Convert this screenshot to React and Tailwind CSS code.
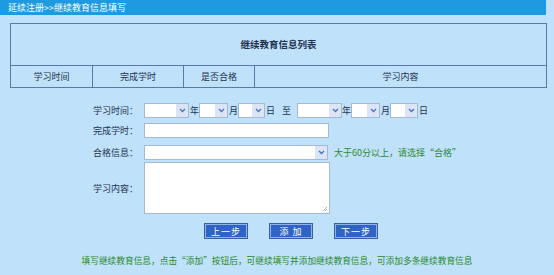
import React from 'react'

const cjk = { fontFamily: '"Noto Sans CJK SC", "Noto Sans", sans-serif' }

const Select = ({ w }) => (
  <div className={`h-[15px] ${w} bg-white border border-[#a5b8d4] flex justify-end`}>
    <div className="w-[12px] h-full bg-[#dce5f5] flex items-center justify-center">
      <svg width="7" height="5" viewBox="0 0 7 5">
        <path d="M1 1 L3.5 3.5 L6 1" fill="none" stroke="#4b6fbf" strokeWidth="1.3" />
      </svg>
    </div>
  </div>
)

const Label = ({ children }) => (
  <div className="w-[60px] text-right pr-[6px] text-[9px] leading-none text-[#22324f]">{children}</div>
)

const Btn = ({ children }) => (
  <div className="w-[42px] h-[14px] bg-[#2f63c5] border border-[#8fb2ea] outline outline-1 outline-[#3b5ea8] flex items-center justify-center text-white text-[9px] leading-none tracking-[1px]">
    {children}
  </div>
)

export default function App() {
  return (
    <div className="w-[554px] h-[275px] bg-[#bfe1fa] flex flex-col" style={cjk}>
      {/* 顶部栏 */}
      <div className="w-[546px] h-[15px] bg-[#1e9be0] flex items-center pl-[8px] text-white text-[9px] leading-none">
        延续注册&gt;&gt;继续教育信息填写
      </div>

      {/* 列表 */}
      <div className="ml-[10px] mt-[8px] w-[537px] border border-[#5a78a8] text-[#22324f]">
        <div className="h-[41px] flex items-center justify-center text-[9.5px] font-bold leading-none">
          继续教育信息列表
        </div>
        <div className="h-[22px] grid grid-cols-[82px_91px_71px_1fr] border-t border-[#5a78a8] text-[9px] leading-none">
          <div className="flex items-center justify-center border-r border-[#5a78a8]">学习时间</div>
          <div className="flex items-center justify-center border-r border-[#5a78a8]">完成学时</div>
          <div className="flex items-center justify-center border-r border-[#5a78a8]">是否合格</div>
          <div className="flex items-center justify-center">学习内容</div>
        </div>
      </div>

      {/* 表单 */}
      <div className="mt-[15px] flex flex-col pl-[84px] text-[#22324f]">
        <div className="flex items-center h-[15px]">
          <Label>学习时间：</Label>
          <Select w="w-[45px]" />
          <span className="ml-[1px] w-[9px] text-[9px] leading-none">年</span>
          <Select w="w-[29px]" />
          <span className="ml-[1px] w-[9px] text-[9px] leading-none">月</span>
          <Select w="w-[27px]" />
          <span className="ml-[1px] w-[9px] text-[9px] leading-none">日</span>
          <span className="ml-[7px] w-[9px] text-[9px] leading-none">至</span>
          <div className="ml-[6px]"><Select w="w-[45px]" /></div>
          <span className="w-[9px] text-[9px] leading-none">年</span>
          <Select w="w-[29px]" />
          <span className="ml-[1px] w-[9px] text-[9px] leading-none">月</span>
          <Select w="w-[28px]" />
          <span className="ml-[1px] w-[9px] text-[9px] leading-none">日</span>
        </div>

        <div className="flex items-center h-[15px] mt-[5px]">
          <Label>完成学时：</Label>
          <div className="w-[185px] h-[15px] bg-white border border-[#a5b8d4]" />
        </div>

        <div className="flex items-center h-[15px] mt-[7px]">
          <Label>合格信息：</Label>
          <Select w="w-[184px]" />
          <span className="ml-[6px] text-[9px] leading-none text-[#2c8a2c]">大于60分以上，请选择“合格”</span>
        </div>

        <div className="flex items-center h-[52px] mt-[2px]">
          <Label>学习内容：</Label>
          <div className="w-[186px] h-[52px] bg-white border border-[#a5b8d4] relative">
            <svg className="absolute right-[1px] bottom-[1px]" width="6" height="6" viewBox="0 0 6 6">
              <path d="M5 1 L1 5 M5 3 L3 5" stroke="#a0a0a0" strokeWidth="0.8" />
            </svg>
          </div>
        </div>
      </div>

      <div className="mt-[10px] flex pl-[205px] gap-[23px]">
        <Btn>上一步</Btn>
        <Btn>添 加</Btn>
        <Btn>下一步</Btn>
      </div>

      <div className="mt-[19px] text-center text-[8.7px] leading-none text-[#2c8a2c]">
        填写继续教育信息，点击“添加”按钮后，可继续填写并添加继续教育信息，可添加多条继续教育信息
      </div>
    </div>
  )
}
